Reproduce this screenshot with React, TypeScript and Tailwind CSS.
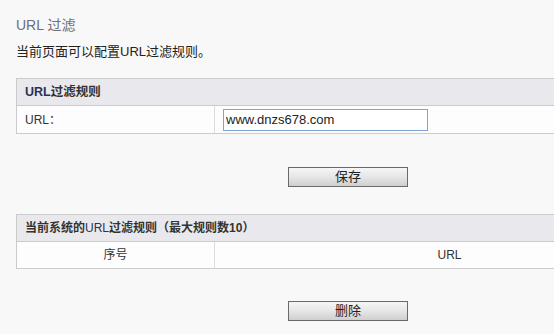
import React from "react";

const font = { fontFamily: '"Liberation Sans", "Noto Sans CJK SC", sans-serif' };

function Btn({ label }: { label: string }) {
  return (
    <div className="flex w-[664px] justify-center">
      <button className="h-[20px] w-[120px] border border-[#6a6a6a] bg-gradient-to-b from-[#f6f6f6] via-[#e6e6e6] to-[#cfcfcf] text-[13px] leading-[18px] text-[#222]">
        {label}
      </button>
    </div>
  );
}

export default function App() {
  return (
    <div className="h-[334px] w-[554px] overflow-hidden bg-[#f8f8f8] text-[12px] text-[#333]" style={font}>
      <div className="w-[700px] pl-[16px]">
        <div className="pt-[15px] text-[14px] leading-[20px] text-[#6e6e78]">URL 过滤</div>
        <div className="mt-[8px] text-[13px] leading-[18px] text-[#222]">当前页面可以配置URL过滤规则。</div>

        <div className="mt-[17px] w-[668px] border border-r-0 border-[#cbcbcb]">
          <div className="flex h-[27px] items-center border-b border-[#cbcbcb] bg-[#e9e9ed] pl-[8px] text-[12.5px] font-bold">
            <span className="text-[#2c3056]">URL</span>过滤规则
          </div>
          <div className="flex h-[27px] bg-[#fdfdfd]">
            <div className="flex w-[198px] items-center border-r border-[#dcdcdc] pl-[8px]">URL：</div>
            <div className="flex items-center pl-[8px]">
              <input
                readOnly
                value="www.dnzs678.com"
                className="h-[22px] w-[205px] border border-[#7fa4d6] bg-white px-[2px] text-[13px] text-[#222] outline-none"
                style={font}
              />
            </div>
          </div>
        </div>

        <div className="mt-[33px]">
          <Btn label="保存" />
        </div>

        <div className="mt-[27px] w-[668px] border border-r-0 border-[#cbcbcb]">
          <div className="flex h-[27px] items-center border-b border-[#cbcbcb] bg-[#e9e9ed] pl-[8px] font-bold">
            当前系统的<span className="font-normal text-[#2c3056]">URL</span>过滤规则（最大规则数10）
          </div>
          <div className="flex h-[26px] bg-[#fdfdfd]">
            <div className="flex w-[198px] items-center justify-center border-r border-[#dcdcdc]">序号</div>
            <div className="flex flex-1 items-center justify-center">URL</div>
          </div>
        </div>

        <div className="mt-[32px]">
          <Btn label="删除" />
        </div>
      </div>
    </div>
  );
}
